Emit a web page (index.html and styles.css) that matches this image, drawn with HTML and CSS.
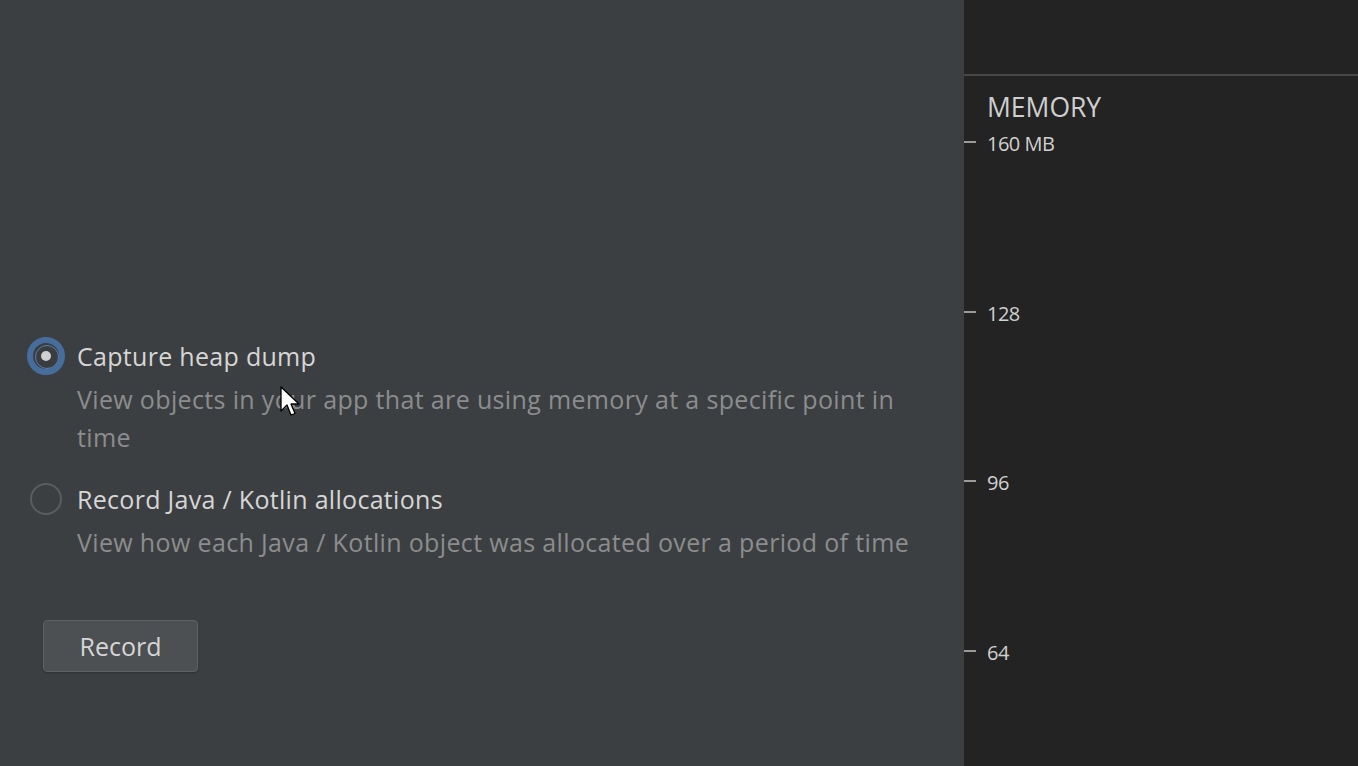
FILE: index.html
```html
<!DOCTYPE html>
<html>
<head>
<meta charset="utf-8">
<link rel="stylesheet" href="styles.css">
</head>
<body>
<div class="app">
  <section class="left">
    <div class="options">
      <label class="option">
        <span class="radio checked"><span class="dot"></span></span>
        <span class="texts">
          <span class="title">Capture heap dump</span>
          <span class="desc">View objects in your app that are using memory at a specific point in time</span>
        </span>
      </label>
      <label class="option">
        <span class="radio"></span>
        <span class="texts">
          <span class="title">Record Java / Kotlin allocations</span>
          <span class="desc">View how each Java / Kotlin object was allocated over a period of time</span>
        </span>
      </label>
      <div class="actions"><button class="btn">Record</button></div>
    </div>
    <svg class="cursor" width="22" height="34" viewBox="0 0 22 34">
      <path d="M1 1 L1 25 L7 19 L11 29 L15 27.5 L11 18 L19 18 Z" fill="#ffffff" stroke="#000000" stroke-width="1.3" stroke-linejoin="round"/>
    </svg>
  </section>
  <section class="right">
    <div class="topbar"></div>
    <div class="chart">
      <div class="label">MEMORY</div>
      <div class="axis">
        <div class="tick"><span class="mark"></span><span class="val">160 MB</span></div>
        <div class="tick"><span class="mark"></span><span class="val">128</span></div>
        <div class="tick"><span class="mark"></span><span class="val">96</span></div>
        <div class="tick"><span class="mark"></span><span class="val">64</span></div>
      </div>
    </div>
  </section>
</div>
</body>
</html>
```

FILE: styles.css
```css
* { box-sizing: border-box; }
html, body { margin: 0; padding: 0; height: 100%; }
body {
  font-family: "Open Sans", "Noto Sans", "Liberation Sans", sans-serif;
  background: #3c3f41;
  overflow: hidden;
}
.app {
  display: flex;
  width: 1358px;
  height: 766px;
  overflow: hidden;
}
.left {
  position: relative;
  width: 964px;
  flex: none;
  background: #3c3f41;
  padding: 337px 0 0 27px;
}
.options {
  display: flex;
  flex-direction: column;
}
.option {
  display: flex;
  align-items: flex-start;
  gap: 12px;
}
.option + .option { margin-top: 24px; }
.radio {
  width: 38px;
  height: 38px;
  border-radius: 50%;
  display: flex;
  align-items: center;
  justify-content: center;
  flex: none;
  position: relative;
}
.radio::before {
  content: "";
  position: absolute;
  left: 3px; top: 3px;
  width: 32px; height: 32px;
  border-radius: 50%;
  border: 2px solid #5b5e60;
  background: #3c3f41;
  box-sizing: border-box;
}
.radio.checked::before {
  left: 0; top: 0;
  width: 38px; height: 38px;
  border: 6px solid #466d9b;
  background: #3a3d3f;
}
.radio.checked::after {
  content: "";
  position: absolute;
  left: 8px; top: 8px;
  width: 22px; height: 22px;
  border-radius: 50%;
  border: 1px solid #5b7eab;
}
.dot {
  position: relative;
  z-index: 1;
  width: 10px; height: 10px;
  border-radius: 50%;
  background: #d0d0d0;
}
.texts {
  display: flex;
  flex-direction: column;
}
.title {
  font-size: 25px;
  line-height: 38px;
  color: #d6d6d6;
  height: 38px;
  letter-spacing: 0.3px;
}
.desc {
  font-size: 25px;
  line-height: 38px;
  color: #8b8d8e;
  max-width: 850px;
  margin-top: 5px;
  letter-spacing: 0.35px;
}
.actions {
  margin-top: 59px;
  padding-left: 16px;
}
.btn {
  width: 155px;
  height: 52px;
  background: #4c5052;
  border: 1px solid #5e6264;
  border-radius: 4px;
  color: #d6d6d6;
  font-family: inherit;
  font-size: 25px;
  padding: 0;
  box-shadow: 0 1px 2px rgba(0,0,0,0.25);
}
.cursor {
  position: absolute;
  left: 280px;
  top: 386px;
}
.right {
  flex: 1;
  background: #232323;
  display: flex;
  flex-direction: column;
  overflow: hidden;
}
.topbar {
  flex: none;
  height: 76px;
  border-bottom: 2px solid #474747;
}
.chart {
  padding: 16px 0 0 0;
}
.label {
  font-size: 26.5px;
  line-height: 30px;
  color: #cfcfcf;
  padding-left: 23px;
}
.axis {
  display: flex;
  flex-direction: column;
  margin-top: 10px;
}
.tick {
  display: flex;
  flex: none;
  height: 169.5px;
  align-items: flex-start;
}
.mark {
  width: 12px;
  height: 2px;
  background: #9a9a9a;
  margin-top: 9px;
  flex: none;
}
.val {
  font-size: 20px;
  line-height: 20px;
  color: #d0d0d0;
  padding-left: 11px;
  padding-top: 2px;
  letter-spacing: -0.5px;
}
```
